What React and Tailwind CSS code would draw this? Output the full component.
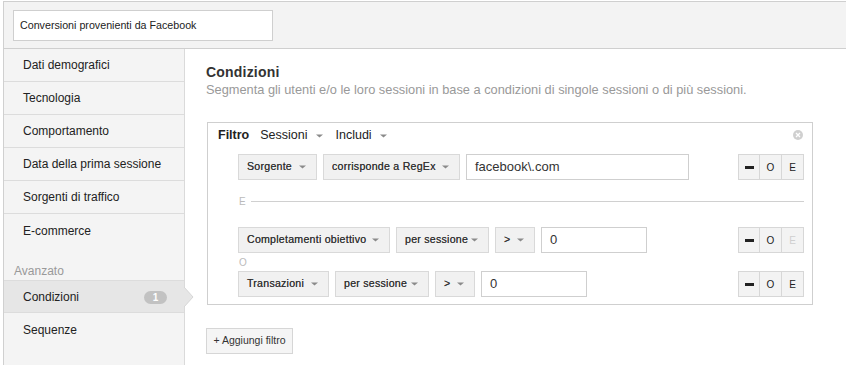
import React from "react";

function Caret() {
  return (
    <svg width="7" height="4" viewBox="0 0 7 4" className="shrink-0">
      <path d="M0 0.5 L7 0.5 L3.5 3.5 Z" fill="#8a8a8a" />
    </svg>
  );
}

function Drop({ label, w }) {
  return (
    <div
      className="h-[26px] flex items-center justify-between bg-[#f1f1f1] border border-[#d9d9d9] pl-[8px] pr-[10px] text-[10.6px] text-[#333] shrink-0 whitespace-nowrap [text-shadow:0_0_0.3px_#555]"
      style={{ width: w }}
    >
      <span className="tracking-[0.25px]">{label}</span>
      <Caret />
    </div>
  );
}

function Input({ value, w }) {
  return (
    <div
      className="h-[26px] flex items-center border border-[#cfcfcf] bg-white pl-[8px] text-[13px] text-[#333] shrink-0"
      style={{ width: w }}
    >
      {value}
    </div>
  );
}

function Btns({ disabledE }) {
  return (
    <div className="flex h-[26px] ml-auto mr-[8px]">
      <div className="w-[22px] h-full bg-[#f3f3f3] border border-[#d7d7d7] flex items-center justify-center">
        <div className="w-[9px] h-[3px] bg-[#222]" />
      </div>
      <div className="w-[22px] h-full bg-[#f3f3f3] border-y border-r border-[#d7d7d7] flex items-center justify-center text-[10px] text-[#222]">
        O
      </div>
      <div
        className={
          "w-[22px] h-full bg-[#f3f3f3] border-y border-r border-[#d7d7d7] flex items-center justify-center text-[10px] " +
          (disabledE ? "text-[#cfcfcf]" : "text-[#222]")
        }
      >
        E
      </div>
    </div>
  );
}

function SideItem({ label, selected, border = true }) {
  return (
    <div
      className={
        "relative h-[33px] flex items-center pl-[19px] text-[12px] text-[#222] " +
        (border ? "border-b border-[#dcdcdc] " : "") +
        (selected ? "bg-[#e6e6e6] border-t" : "")
      }
    >
      {label}
      {selected && (
        <>
          <div className="absolute left-[140px] top-[10px] w-[23px] h-[13px] rounded-full bg-[#c2c2c2] text-white text-[10px] font-bold flex items-center justify-center">
            1
          </div>
          <svg
            width="10"
            height="20"
            viewBox="0 0 10 20"
            className="absolute right-[-10px] top-[6px]"
          >
            <path d="M0 0 L9 10 L0 20 Z" fill="#e6e6e6" />
            <path d="M0 0 L9 10 L0 20" fill="none" stroke="#d6d6d6" />
          </svg>
        </>
      )}
    </div>
  );
}

export default function App() {
  return (
    <div className="w-[846px] h-[365px] bg-white overflow-hidden font-['Liberation_Sans',Arial,sans-serif]">
      <div className="ml-[3px] mt-[1px] h-[364px] border-l border-[#d0d0d0] flex flex-col">
        <div className="h-[48px] shrink-0 bg-[#f3f3f3] border-t border-b border-[#cfcfcf] flex items-start pl-[9px] pt-[8px]">
          <div className="w-[260px] h-[31px] bg-white border border-[#cfcfcf] flex items-center pl-[6px] text-[10.7px] text-[#222]">
            Conversioni provenienti da Facebook
          </div>
        </div>
        <div className="flex flex-1">
          <div className="w-[181px] shrink-0 bg-[#f4f4f4] border-r border-[#dadada] relative z-10">
            <SideItem label="Dati demografici" />
            <SideItem label="Tecnologia" />
            <SideItem label="Comportamento" />
            <SideItem label="Data della prima sessione" />
            <SideItem label="Sorgenti di traffico" />
            <SideItem label="E-commerce" border={false} />
            <div className="h-[33px] flex items-end pl-[10px] pb-0 text-[12px] text-[#999]">
              Avanzato
            </div>
            <SideItem label="Condizioni" selected />
            <SideItem label="Sequenze" border={false} />
          </div>
          <div className="flex-1 pl-[21px] pt-[15px]">
            <div className="text-[14px] font-bold text-[#333] leading-[16px] tracking-[0.2px]">
              Condizioni
            </div>
            <div className="text-[12.8px] text-[#999] leading-[16px] mt-[2px]">
              Segmenta gli utenti e/o le loro sessioni in base a condizioni di singole sessioni o di più sessioni.
            </div>
            <div className="mt-[24px] ml-[1px] w-[606px] h-[183px] border border-[#cfcfcf] relative">
              <div className="flex items-center h-[24px] pt-[1px] pl-[10px] text-[12.5px] text-[#222]">
                <span className="font-bold">Filtro</span>
                <span className="ml-[11px]">Sessioni</span>
                <span className="ml-[8px]"><Caret /></span>
                <span className="ml-[13px]">Includi</span>
                <span className="ml-[8px]"><Caret /></span>
              </div>
              <div className="absolute right-[9px] top-[7px] w-[10px] h-[10px] rounded-full bg-[#d0d0d0] flex items-center justify-center">
                <svg width="6" height="6" viewBox="0 0 6 6">
                  <path d="M1 1 L5 5 M5 1 L1 5" stroke="#fff" strokeWidth="1.3" />
                </svg>
              </div>
              <div className="flex items-center gap-[6px] pl-[30px] mt-[7px]">
                <Drop label="Sorgente" w={79} />
                <Drop label="corrisponde a RegEx" w={137} />
                <Input value="facebook\.com" w={223} />
                <Btns />
              </div>
              <div className="flex items-center pl-[31px] pr-[8px] mt-[14px] h-[14px]">
                <span className="text-[10px] text-[#bbb]">E</span>
                <div className="flex-1 ml-[5px] h-px bg-[#d0d0d0]" />
              </div>
              <div className="flex items-center gap-[6px] pl-[30px] mt-[19px]">
                <Drop label="Completamenti obiettivo" w={152} />
                <Drop label="per sessione" w={93} />
                <Drop label=">" w={40} />
                <Input value="0" w={106} />
                <Btns disabledE />
              </div>
              <div className="pl-[31px] h-[18px] flex items-center text-[10px] text-[#bbb]">O</div>
              <div className="flex items-center gap-[6px] pl-[30px]">
                <Drop label="Transazioni" w={91} />
                <Drop label="per sessione" w={94} />
                <Drop label=">" w={40} />
                <Input value="0" w={106} />
                <Btns />
              </div>
            </div>
            <div className="mt-[23px] w-[87px] h-[26px] bg-[#f5f5f5] border border-[#d6d6d6] flex items-center justify-center text-[10.5px] text-[#333]">
              + Aggiungi filtro
            </div>
          </div>
        </div>
      </div>
    </div>
  );
}
